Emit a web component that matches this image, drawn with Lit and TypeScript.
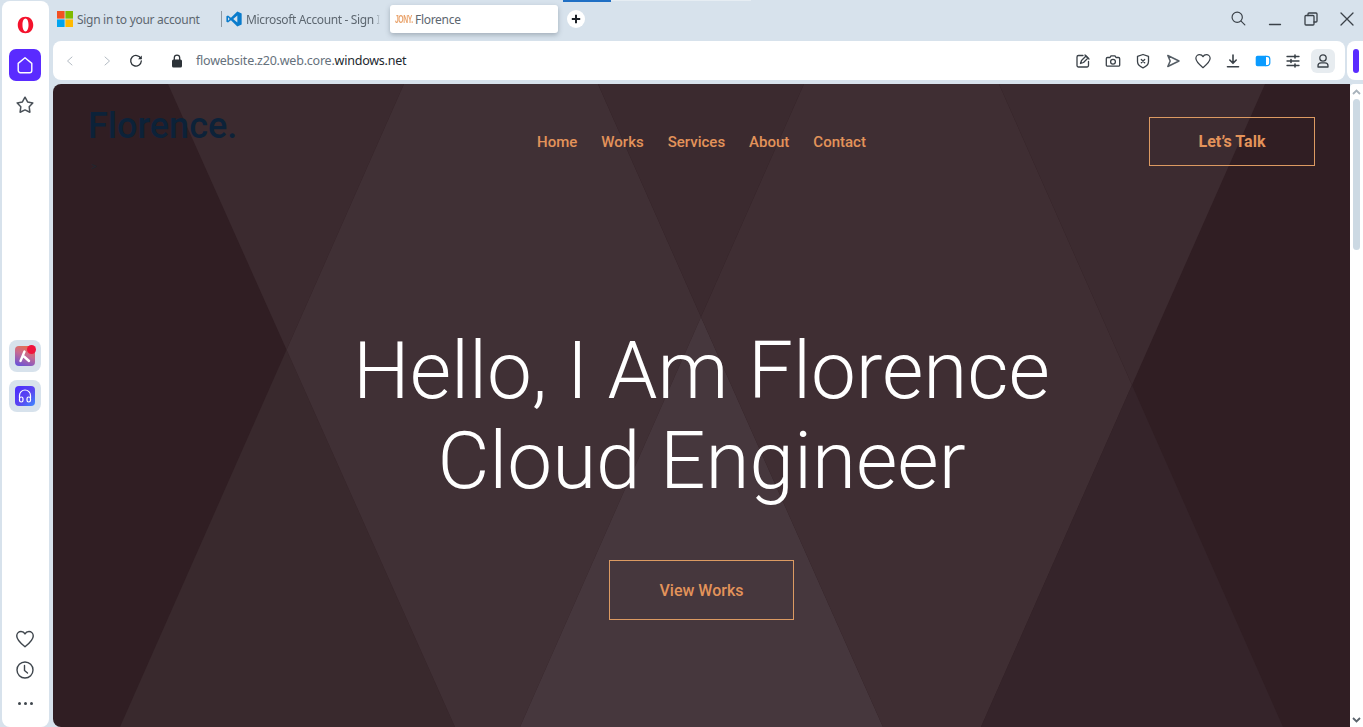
import { LitElement, html, css, svg } from "lit";
import { customElement } from "lit/decorators.js";

const S = (w: number, body: unknown, vb = 20) => html`<svg width=${w} height=${w} viewBox="0 0 ${vb} ${vb}" fill="none" stroke="#3a4148" stroke-width="1.3" stroke-linecap="round" stroke-linejoin="round">${body}</svg>`;

const heart = svg`<path d="M10 17 C5 13 2.5 10.5 2.5 7.2 C2.5 4.8 4.4 3.2 6.4 3.2 C8 3.2 9.3 4 10 5.4 C10.7 4 12 3.2 13.6 3.2 C15.6 3.2 17.5 4.8 17.5 7.2 C17.5 10.5 15 13 10 17 Z"/>`;

const regions: [string, string][] = [
  ["#3b2a2f", "115,0 351,0 233.6,265.8"],
  ["#39292d", "233.6,265.8 402,643 67,643"],
  ["#403035", "351,0 545,0 648,233 467,643 402,643 233.6,265.8"],
  ["#3b2a2f", "545,0 751,0 648,233"],
  ["#46373d", "648,233 830,643 467,643"],
  ["#3f2e33", "751,0 946,0 1079,301 928,643 830,643 648,233"],
  ["#3c2b30", "946,0 1212,0 1079,301"],
  ["#35242a", "1079,301 1230,643 928,643"],
];

@customElement("app-root")
export class AppRoot extends LitElement {
  static styles = css`
    :host { display: block; width: 1363px; height: 727px; overflow: hidden; background: #d7e2ec; font-family: "Noto Sans", sans-serif; }
    .app { display: flex; height: 727px; }
    .side { width: 47px; box-sizing: border-box; padding-right: 1px; margin: 1px 0 0 2px; background: #fff; border-radius: 8px; display: flex; flex-direction: column; align-items: center; height: 726px; flex: none; }
    .opera { margin-top: 14px; height: 20px; display: flex; align-items: center; }
    .home { margin-top: 14px; width: 32px; height: 32px; border-radius: 7px; background: #5a2bff; display: flex; align-items: center; justify-content: center; }
    .star { margin-top: 14px; height: 20px; display: flex; }
    .tile { width: 32px; height: 32px; border-radius: 8px; background: #d7e2ec; display: flex; align-items: center; justify-content: center; position: relative; }
    .tile.first { margin-top: 225px; }
    .tile.second { margin-top: 8px; }
    .inner { width: 20px; height: 20px; border-radius: 4px; display: flex; align-items: center; justify-content: center; }
    .inner.a { background: linear-gradient(200deg, #f0703a 0%, #c86a90 45%, #5f50e0 100%); }
    .inner.b { background: linear-gradient(135deg, #4a2dff 0%, #5a45f0 55%, #3f8cff 100%); }
    .dot { position: absolute; top: 5px; right: 5px; width: 9px; height: 9px; border-radius: 50%; background: #f0143c; }
    .grow { flex: 1; }
    .s-heart { height: 22px; display: flex; }
    .s-clock { margin-top: 10px; height: 20px; display: flex; }
    .s-dots { margin-top: 22px; margin-bottom: 22px; display: flex; gap: 3px; }
    .s-dots i { width: 3px; height: 3px; border-radius: 50%; background: #3f464d; display: block; }

    .main { flex: 1; min-width: 0; margin-left: 4px; display: flex; flex-direction: column; }
    .tabs { height: 41px; display: flex; position: relative; font-size: 12px; color: #5d6770; flex: none; }
    .indicator { position: absolute; left: 510px; top: 0; width: 48px; height: 1.5px; background: #1f6fc4; }
    .indicator2 { position: absolute; left: 558px; top: 0; width: 140px; height: 1px; background: #e6edf3; }
    .tab { display: flex; align-items: center; height: 28px; margin-top: 5px; white-space: nowrap; overflow: hidden; flex: none; box-sizing: border-box; }
    .t1 { width: 168px; padding-left: 4px; gap: 4px; }
    .t2 { width: 169px; gap: 4px; }
    .t2 .cut { width: 134px; overflow: hidden; -webkit-mask-image: linear-gradient(90deg, #000 96%, transparent); mask-image: linear-gradient(90deg, #000 96%, transparent); }
    .t2 .tx { letter-spacing: -.36px; }
    .sep { width: 1px; height: 16px; background: #8e99a3; flex: none; }
    .t3 { width: 168px; background: #fff; border-radius: 3px; box-shadow: 0 2px 5px rgba(60,75,90,.35); padding-left: 5px; gap: 4px; }
    .jony { width: 16px; font: 700 10px "Liberation Sans", sans-serif; color: #e9a26a; letter-spacing: -.6px; transform: scaleX(.68); transform-origin: left; }
    .plus { width: 18px; height: 18px; border-radius: 50%; background: #fff; margin: 10px 0 0 9px; display: flex; align-items: center; justify-content: center; flex: none; }
    .win { margin-left: auto; margin-right: -2px; display: flex; align-items: center; height: 38px; }
    .win span { width: 36px; display: flex; justify-content: center; }
    .tx { display: block; letter-spacing: -.3px; }

    .bars { display: flex; gap: 2px; height: 39px; flex: none; }
    .addr { width: 1292px; background: #fff; border-radius: 8px; display: flex; align-items: center; flex: none; }
    .nav-i { display: flex; width: 16px; justify-content: center; flex: none; }
    .ni1 { margin-left: 9px; }
    .ni2 { margin-left: 21px; }
    .ni3 { margin-left: 13px; }
    .ni4 { margin-left: 25px; }
    .url { font-size: 12.5px; letter-spacing: -.22px; color: #66717c; margin-left: 11px; white-space: nowrap; }
    .url b { font-weight: 400; color: #22282e; }
    .tools { margin-left: auto; display: flex; align-items: center; padding-right: 10px; }
    .tools span { width: 30px; height: 24px; display: flex; align-items: center; justify-content: center; }
    .tools .user { width: 24px; margin-left: 3px; background: #e7ecf0; border-radius: 6px; }
    .mini { flex: 1; background: #fff; border-radius: 8px 0 0 8px; display: flex; align-items: center; padding-left: 6px; }
    .mini i { width: 6px; height: 24px; border-radius: 3px; background: #5a2bff; display: block; }

    .body { flex: 1; display: flex; margin-top: 4px; min-height: 0; }
    .hero { width: 1297px; flex: none; background: #301e23; border-radius: 8px 0 0 8px; position: relative; overflow: hidden; font-family: Roboto, sans-serif; display: flex; flex-direction: column; align-items: center; }
    .bg { position: absolute; inset: 0; }
    .head { position: relative; width: 100%; box-sizing: border-box; display: grid; grid-template-columns: 1fr auto 1fr; padding: 20px 35px 0 35px; }
    .logo { font-size: 36px; line-height: 42px; font-weight: 500; color: #0c2239; margin-top: 1px; }
    .chev { font-size: 11px; line-height: 13px; color: #1f2630; margin: 13px 0 0 3px; }
    .nav { display: flex; gap: 24px; margin-top: 13px; height: 49px; align-items: center; }
    .nav a { font-size: 15px; font-weight: 500; color: #e3935a; }
    .btn { box-sizing: border-box; border: 1px solid #dc9a62; display: flex; align-items: center; justify-content: center; font-size: 16px; font-weight: 700; color: #e3935a; }
    .talk { width: 166px; height: 49px; margin-top: 13px; justify-self: end; }
    h1 { position: relative; margin: 153px 0 0; font-size: 80px; line-height: 90px; font-weight: 300; color: #fff; text-align: center; }
    .works { position: relative; width: 185px; height: 60px; margin-top: 54px; font-weight: 500; }

    .scroll { flex: 1; background: #fff; position: relative; display: flex; flex-direction: column; align-items: center; border-radius: 4px 0 0 0; }
    .sa { height: 15px; display: flex; align-items: center; flex: none; }
    .thumb { width: 7px; height: 151px; background: #ccd9e3; border-radius: 4px; flex: none; }
  `;

  render() {
    return html`<div class="app">
      <aside class="side">
        <div class="opera"><svg width="17" height="18" viewBox="0 0 18 20" preserveAspectRatio="none"><path fill-rule="evenodd" fill="#f4122c" d="M9 .8C13.8.8 17.2 4.7 17.2 10S13.8 19.2 9 19.2.8 15.300.8 10 4.200.8 9 .8ZM9 2.900C7.100 2.900 5.800 6 5.800 10S7.100 17.100 9 17.100 12.200 14 12.200 10 10.900 2.900 9 2.900Z"/></svg></div>
        <div class="home"><svg width="20" height="20" viewBox="0 0 20 20" fill="none" stroke="#fff" stroke-width="1.4" stroke-linejoin="round"><path d="M3.200 8.400 10 2.800 16.800 8.400V15.500A2.200 2.200 0 0 1 14.600 17.700H5.400A2.200 2.200 0 0 1 3.200 15.500Z"/></svg></div>
        <div class="star">${S(20, svg`<path stroke="#4a5158" stroke-width="1.5" d="M10 2.200 12.600 6.900 17.800 7.900 14.200 11.800 14.900 17.200 10 14.900 5.100 17.200 5.800 11.800 2.200 7.900 7.400 6.900Z"/>`)}</div>
        <div class="tile first"><div class="inner a"><svg width="14" height="14" viewBox="0 0 14 14" fill="none" stroke="#fff" stroke-width="2.400" stroke-linecap="round"><path d="M2.500 12 6.500 2.500M6 7.500 11 12"/></svg></div><i class="dot"></i></div>
        <div class="tile second"><div class="inner b"><svg width="16" height="16" viewBox="0 0 16 16" fill="none" stroke="#fff" stroke-width="1.200" stroke-linecap="round"><path d="M2.500 10V7.500A5.500 5.500 0 0 1 13.500 7.500V10"/><rect x="2.500" y="9" width="3.500" height="5" rx="1.700"/><rect x="10" y="9" width="3.500" height="5" rx="1.700"/></svg></div></div>
        <div class="grow"></div>
        <div class="s-heart">${S(22, svg`<g stroke="#3f464d" stroke-width="1.300">${heart}</g>`)}</div>
        <div class="s-clock">${S(20, svg`<circle cx="10" cy="10" r="8" stroke="#3f464d" stroke-width="1.400"/><path d="M9.500 5.500V10.500L12.500 13" stroke="#3f464d" stroke-width="1.400"/>`)}</div>
        <div class="s-dots"><i></i><i></i><i></i></div>
      </aside>
      <div class="main">
        <div class="tabs">
          <div class="tab t1"><svg width="16" height="16" viewBox="0 0 16 16"><rect width="7.600" height="7.600" fill="#f25022"/><rect x="8.400" width="7.600" height="7.600" fill="#7fba00"/><rect y="8.400" width="7.600" height="7.600" fill="#00a4ef"/><rect x="8.400" y="8.400" width="7.600" height="7.600" fill="#ffb900"/></svg><span class="tx">Sign in to your account</span></div>
          <div class="tab t2"><i class="sep"></i><svg width="16" height="16" viewBox="0 0 24 24"><path fill="#0a7ccc" fill-rule="evenodd" d="M17 .8 23.500 3.900V20.100L17 23.200 7.400 14 3 17.400 .6 16.200V7.800L3 6.600 7.400 10ZM17 6.800 10.800 12 17 17.200ZM3 9.300V14.700L5.600 12Z"/></svg><span class="cut"><span class="tx">Microsoft Account - Sign In</span></span></div>
          <div class="tab t3"><span class="jony">JONY.</span><span class="tx">Florence</span></div>
          <div class="plus"><svg width="10" height="10" viewBox="0 0 10 10" stroke="#1d2228" stroke-width="2"><path d="M5 .8V9.200M.8 5H9.200"/></svg></div>
          <i class="indicator"></i><i class="indicator2"></i>
          <div class="win">
            <span>${S(18, svg`<circle cx="8" cy="8" r="5.700"/><path d="M12.300 12.300 16.500 16.500"/>`)}</span>
            <span>${S(14, svg`<path d="M1.500 12.500H12.500"/>`, 14)}</span>
            <span>${S(14, svg`<rect x="1" y="3.500" width="9" height="9.500" rx="1"/><path d="M4 3.500V2A1 1 0 0 1 5 1H12A1 1 0 0 1 13 2V9A1 1 0 0 1 12 10H10"/>`, 14)}</span>
            <span>${S(14, svg`<path d="M1 1 13 13M13 1 1 13"/>`, 14)}</span>
          </div>
        </div>
        <div class="bars">
          <div class="addr">
            <span class="nav-i ni1">${S(12, svg`<path stroke="#b4bcc4" stroke-width="1" d="M8 2 3.500 6 8 10"/>`, 12)}</span>
            <span class="nav-i ni2">${S(12, svg`<path stroke="#b4bcc4" stroke-width="1" d="M4 2 8.500 6 4 10"/>`, 12)}</span>
            <span class="nav-i ni3">${S(14, svg`<path stroke="#2c3238" d="M11.800 4.500A5.300 5.300 0 1 0 12.300 7"/><path fill="#2c3238" stroke="none" d="M9 5.300H12.800V1.500Z"/>`, 14)}</span>
            <span class="nav-i ni4"><svg width="12" height="14" viewBox="0 0 12 14"><path fill="none" stroke="#2c3238" stroke-width="1.300" d="M3.300 6V3.800A2.700 2.700 0 0 1 8.700 3.800V6"/><rect x="1" y="5.500" width="10" height="8" rx="1.500" fill="#2c3238"/></svg></span>
            <div class="url">flowebsite.z20.web.core.<b>windows.net</b></div>
            <div class="tools">
              <span>${S(16, svg`<path d="M8 2.500H3.500A1.500 1.500 0 0 0 2 4V12.500A1.500 1.500 0 0 0 3.500 14H12A1.500 1.500 0 0 0 13.500 12.500V8.500"/><path d="M5.500 10.500 6.500 7.500 11 3 13 5 8.500 9.500Z"/><path d="M10 2 14 6"/>`, 16)}</span>
              <span>${S(16, svg`<path d="M2.500 4.500H5L6 2.800H10L11 4.500H13.500A1.200 1.200 0 0 1 14.700 5.700V12A1.200 1.200 0 0 1 13.500 13.200H2.500A1.200 1.200 0 0 1 1.300 12V5.700A1.200 1.200 0 0 1 2.500 4.500Z"/><circle cx="8" cy="8.700" r="2.400"/>`, 16)}</span>
              <span>${S(16, svg`<path d="M8 1.500 13.500 3.300V8.500C13.500 11.300 11 13.500 8 14.800 5 13.500 2.500 11.300 2.500 8.500V3.300Z"/><path d="M6.300 6.500 9.700 9.700M9.700 6.500 6.300 9.700"/>`, 16)}</span>
              <span>${S(16, svg`<path stroke="#555d65" stroke-width="1.500" d="M2.800 2.500 14 8 2.800 13.500 5.200 8Z"/>`, 16)}</span>
              <span>${S(16, svg`<g transform="translate(-1.500 -1.500) scale(.95)" stroke-width="1.300">${heart}</g>`, 16)}</span>
              <span>${S(16, svg`<path d="M8 2V10M4.800 7 8 10.300 11.200 7" stroke-width="1.600"/><path d="M2.500 13.800H13.500" stroke-width="1.600"/>`, 16)}</span>
              <span><svg width="16" height="12" viewBox="0 0 16 12"><path d="M2.500 .8H11V11.200H2.500A1.800 1.800 0 0 1 .7 9.400V2.600A1.800 1.800 0 0 1 2.500 .8Z" fill="#0a9bff"/><path d="M10.500 1.300H12A2.800 2.800 0 0 1 14.800 4.100V7.900A2.800 2.800 0 0 1 12 10.700H10.500" fill="none" stroke="#0a9bff" stroke-width="1.200"/></svg></span>
              <span>${S(16, svg`<path d="M2 3.500H14M2 8H14M2 12.500H14"/><path stroke-width="1.600" d="M10 2V5M6 6.500V9.500M10 11V14"/>`, 16)}</span>
              <span class="user">${S(16, svg`<circle cx="8" cy="5" r="3.200"/><path d="M3 14V12.800C3 11 4.500 9.800 6 9.800H10C11.500 9.800 13 11 13 12.800V14Z"/>`, 16)}</span>
            </div>
          </div>
          <div class="mini"><i></i></div>
        </div>
        <div class="body">
          <section class="hero">
            <svg class="bg" width="1297" height="643" viewBox="0 0 1297 643">
              ${regions.map(([c, p]) => svg`<polygon fill=${c} points=${p} />`)}
            </svg>
            <header class="head">
              <div><div class="logo">Florence.</div><div class="chev">&gt;</div></div>
              <nav class="nav"><a>Home</a><a>Works</a><a>Services</a><a>About</a><a>Contact</a></nav>
              <div class="btn talk">Let’s Talk</div>
            </header>
            <h1>Hello, I Am Florence<br />Cloud Engineer</h1>
            <div class="btn works">View Works</div>
          </section>
          <div class="scroll">
            <div class="sa"><svg width="9" height="6" viewBox="0 0 9 6" fill="none" stroke="#a8b2bb" stroke-width="1.800"><path d="M1 5 4.500 1.500 8 5"/></svg></div>
            <div class="thumb"></div>
            <div class="grow"></div>
            <div class="sa"><svg width="9" height="6" viewBox="0 0 9 6" fill="none" stroke="#5a636b" stroke-width="1.800"><path d="M1 1 4.500 4.500 8 1"/></svg></div>
          </div>
        </div>
      </div>
    </div>`;
  }
}
